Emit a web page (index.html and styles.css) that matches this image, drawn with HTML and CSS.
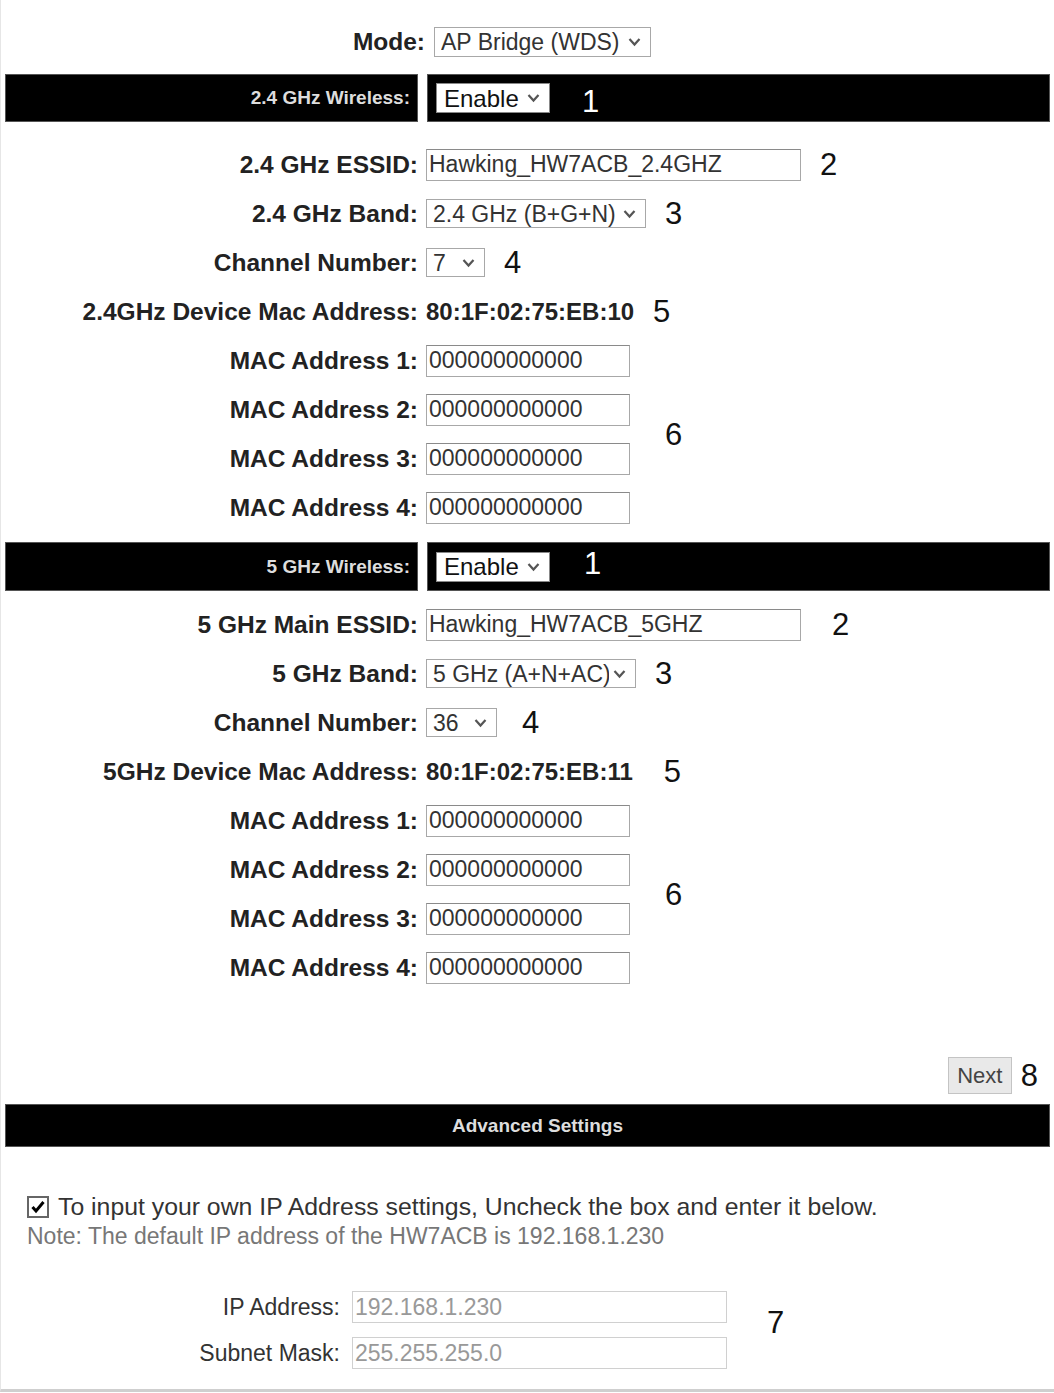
FILE: index.html
```html
<!DOCTYPE html>
<html lang="en">
<head>
  <meta charset="UTF-8">
  <title>Wireless Setup</title>
  <link rel="stylesheet" href="styles.css">
</head>
<body>
  <div class="page">
    <form id="form">
    <div class="mode-row">
      <label class="label">Mode:</label>
      <div class="field"><select class="select mode-select"><option>AP Bridge (WDS)</option></select></div>
    </div>

    <!-- 2.4 GHz -->
    <div class="bar">
      <div class="bar-label">2.4 GHz Wireless:</div>
      <div class="bar-field"><select class="select bar-select"><option>Enable</option></select><span class="num light">1</span></div>
    </div>
    <div class="rows first">
      <div class="row">
        <label class="label">2.4 GHz ESSID:</label>
        <div class="field"><input class="text essid" value="Hawking_HW7ACB_2.4GHZ"><span class="num">2</span></div>
      </div>
      <div class="row">
        <label class="label">2.4 GHz Band:</label>
        <div class="field"><select class="select band"><option>2.4 GHz (B+G+N)</option></select><span class="num">3</span></div>
      </div>
      <div class="row">
        <label class="label">Channel Number:</label>
        <div class="field"><select class="select channel"><option>7</option></select><span class="num">4</span></div>
      </div>
      <div class="row">
        <label class="label">2.4GHz Device Mac Address:</label>
        <div class="field"><span class="value">80:1F:02:75:EB:10</span><span class="num">5</span></div>
      </div>
      <div class="mac-group">
        <div class="mac-rows">
          <div class="row"><label class="label">MAC Address 1:</label><div class="field"><input class="text mac" value="000000000000"></div></div>
          <div class="row"><label class="label">MAC Address 2:</label><div class="field"><input class="text mac" value="000000000000"></div></div>
          <div class="row"><label class="label">MAC Address 3:</label><div class="field"><input class="text mac" value="000000000000"></div></div>
          <div class="row"><label class="label">MAC Address 4:</label><div class="field"><input class="text mac" value="000000000000"></div></div>
        </div>
        <span class="num">6</span>
      </div>
    </div>

    <!-- 5 GHz -->
    <div class="bar">
      <div class="bar-label">5 GHz Wireless:</div>
      <div class="bar-field"><select class="select bar-select"><option>Enable</option></select><span class="num light">1</span></div>
    </div>
    <div class="rows">
      <div class="row">
        <label class="label">5 GHz Main ESSID:</label>
        <div class="field"><input class="text essid" value="Hawking_HW7ACB_5GHZ"><span class="num wide">2</span></div>
      </div>
      <div class="row">
        <label class="label">5 GHz Band:</label>
        <div class="field"><select class="select band5"><option>5 GHz (A+N+AC)</option></select><span class="num">3</span></div>
      </div>
      <div class="row">
        <label class="label">Channel Number:</label>
        <div class="field"><select class="select channel5"><option>36</option></select><span class="num nudge">4</span></div>
      </div>
      <div class="row">
        <label class="label">5GHz Device Mac Address:</label>
        <div class="field"><span class="value">80:1F:02:75:EB:11</span><span class="num wide">5</span></div>
      </div>
      <div class="mac-group">
        <div class="mac-rows">
          <div class="row"><label class="label">MAC Address 1:</label><div class="field"><input class="text mac" value="000000000000"></div></div>
          <div class="row"><label class="label">MAC Address 2:</label><div class="field"><input class="text mac" value="000000000000"></div></div>
          <div class="row"><label class="label">MAC Address 3:</label><div class="field"><input class="text mac" value="000000000000"></div></div>
          <div class="row"><label class="label">MAC Address 4:</label><div class="field"><input class="text mac" value="000000000000"></div></div>
        </div>
        <span class="num">6</span>
      </div>
    </div>

    <div class="next-row">
      <button type="button" class="next">Next</button><span class="num">8</span>
    </div>

    <div class="adv-bar">Advanced Settings</div>

    <div class="ip-section">
      <label class="check-line"><input type="checkbox" class="check" checked> To input your own IP Address settings, Uncheck the box and enter it below.</label>
      <div class="note">Note: The default IP address of the HW7ACB is 192.168.1.230</div>
      <div class="ip-group">
        <div class="ip-rows">
          <div class="ip-row"><label class="ip-label">IP Address:</label><input class="text ip" value="192.168.1.230" disabled></div>
          <div class="ip-row"><label class="ip-label">Subnet Mask:</label><input class="text ip" value="255.255.255.0" disabled></div>
        </div>
        <span class="num">7</span>
      </div>
    </div>
    </form>
  </div>
</body>
</html>
```

FILE: styles.css
```css
body { margin: 0; background: white; font-family: "Liberation Sans", Arial, sans-serif; color: #222; }
.page { padding: 17px 4px 0 4px; border-left: 1px solid #e6e6e6; border-bottom: 3px solid #cfcfcf; }

/* form rows */
.mode-row { display: grid; grid-template-columns: 420px 1fr; column-gap: 9px; height: 49px; align-items: center; }
.row { display: grid; grid-template-columns: 413px 1fr; column-gap: 8px; height: 49px; align-items: center; }
.label { text-align: right; font-weight: bold; font-size: 24.5px; color: #222; white-space: nowrap; }
.field { display: flex; align-items: center; gap: 19px; }
.value { font-weight: bold; font-size: 24px; color: #222; }

.rows.first { margin-top: 18px; }
.rows { margin-top: 9px; }

.mac-group { display: flex; align-items: center; gap: 35px; }
.mac-rows { width: 625px; }

.num { font-size: 31px; line-height: 1; color: #111; }
.num.wide { margin-left: 12px; }
.num.nudge { margin-left: 6px; }

/* controls */
.text {
  box-sizing: border-box;
  height: 32px;
  border: 1px solid #a8a8a8;
  border-top-color: #8a8a8a;
  padding: 0 2px;
  font-family: "Liberation Sans", Arial, sans-serif;
  font-size: 23px;
  color: #333;
  background: white;
}
.essid { width: 375px; }
.mac { width: 204px; }

.select {
  box-sizing: border-box;
  appearance: none;
  -webkit-appearance: none;
  height: 30px;
  border: 1px solid #a8a8a8;
  border-radius: 0;
  padding: 0 26px 0 6px;
  font-family: "Liberation Sans", Arial, sans-serif;
  font-size: 23px;
  color: #333;
  background: white url("data:image/svg+xml,%3Csvg xmlns='http://www.w3.org/2000/svg' width='13' height='10'%3E%3Cpath d='M1.5 2l5 5.5 5-5.5' fill='none' stroke='%23555' stroke-width='2.2'/%3E%3C/svg%3E") no-repeat right 9px center;
}
.mode-select { width: 217px; }
.band { width: 220px; height: 29px; }
.channel { width: 59px; height: 29px; }
.band5 { width: 210px; height: 29px; }
.channel5 { width: 71px; height: 29px; }

/* black bars */
.bar { display: grid; grid-template-columns: 413px 1fr; column-gap: 9px; height: 48px; margin-top: 8px; }
.bar + .rows { margin-top: 18px; }
.bar-label, .bar-field { background: black; border: 1px solid #555; display: flex; align-items: center; }
.bar-label { justify-content: flex-end; padding-right: 7px; color: #ddd; font-weight: bold; font-size: 19px; }
.bar-field { padding-left: 8px; }
.bar-select { width: 114px; height: 30px; font-size: 24px; color: #111; border-color: #888; padding-left: 7px; }
.bar-field .num.light { color: #fff; margin-left: 32px; padding-top: 6px; }

.rows + .bar { margin-top: 10px; height: 49px; }
.rows + .bar .num.light { margin-left: 34px; padding-top: 0; padding-bottom: 6px; }
.rows + .bar + .rows { margin-top: 9px; }

/* next + advanced */
.next-row { display: flex; justify-content: flex-end; align-items: center; gap: 9px; margin-top: 65px; padding-right: 12px; }
.next {
  height: 37px;
  width: 64px;
  border: 1px solid #c4c4c4;
  background: #e9e9e9;
  font-family: "Liberation Sans", Arial, sans-serif;
  font-size: 22px;
  color: #444;
  padding: 0;
}
.adv-bar {
  margin-top: 10px;
  height: 43px;
  background: black;
  border: 1px solid #555;
  box-sizing: border-box;
  display: flex;
  align-items: center;
  justify-content: center;
  padding-left: 20px;
  color: #ddd;
  font-weight: bold;
  font-size: 19px;
}

/* ip settings */
.ip-section { padding: 45px 0 13px 22px; }
.check-line { display: flex; align-items: center; gap: 9px; height: 30px; font-size: 24.8px; color: #333; }
.check {
  appearance: none;
  -webkit-appearance: none;
  margin: 0;
  width: 22px;
  height: 22px;
  border: 2px solid #666;
  background: white url("data:image/svg+xml,%3Csvg xmlns='http://www.w3.org/2000/svg' width='18' height='18'%3E%3Cpath d='M3.5 9l3.5 4 7.5-9' fill='none' stroke='%23000' stroke-width='3'/%3E%3C/svg%3E") no-repeat center;
}
.note { height: 28px; line-height: 28px; font-size: 23px; color: #777; }

.ip-group { display: flex; align-items: center; gap: 40px; margin-top: 34px; }
.ip-group .num { margin-bottom: 16px; }
.ip-row { display: grid; grid-template-columns: 313px 375px; column-gap: 12px; height: 46px; align-items: center; }
.ip-label { text-align: right; font-size: 23px; color: #333; }
.ip { width: 375px; border-color: #d0d0d0; color: #999; background: white; }
```
